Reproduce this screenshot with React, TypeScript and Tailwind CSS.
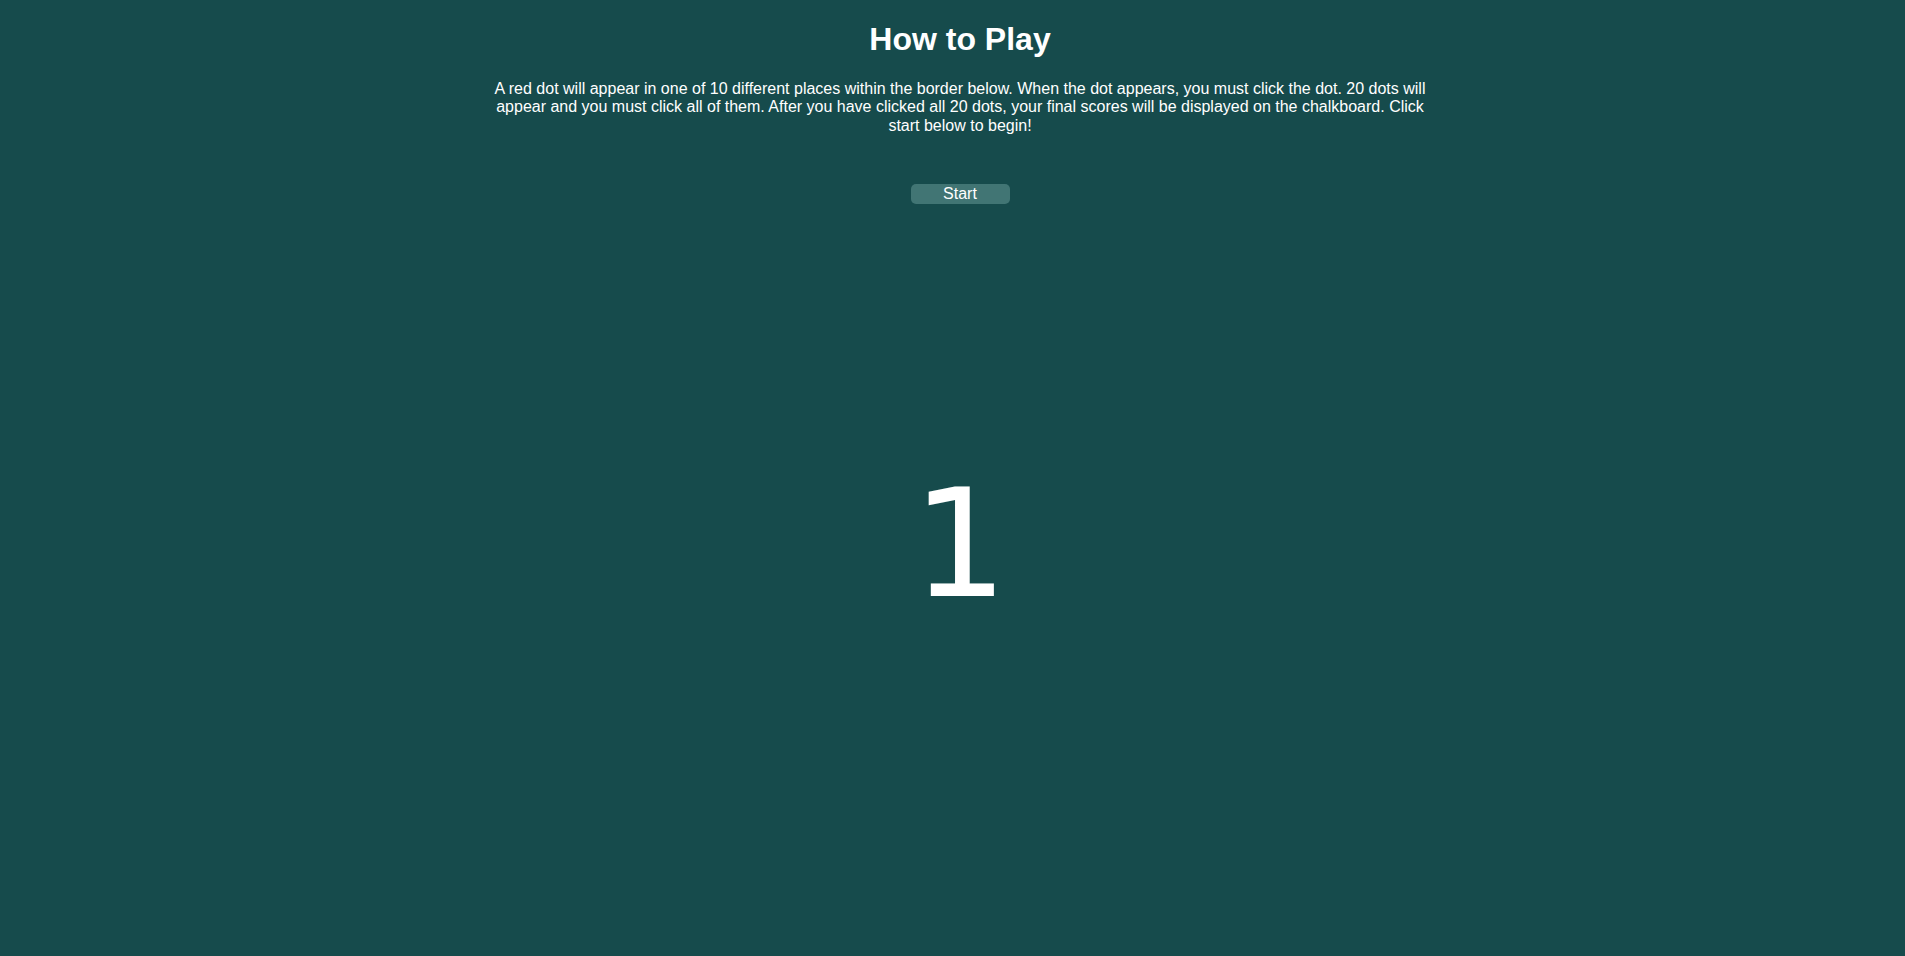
export default function App() {
  return (
    <div className="w-full min-h-[956px] bg-[#164b4c] overflow-hidden text-white">
      <div className="w-[1920px] flex flex-col items-center font-['Liberation_Sans',Arial,sans-serif]">
        <h1 className="mt-[21px] text-[32px] font-bold leading-[37px]">How to Play</h1>
        <p className="mt-[22px] w-[960px] text-center text-[16px] leading-[18.4px]">
          A red dot will appear in one of 10 different places within the border below. When the dot appears, you must click the dot. 20 dots will appear and you must click all of them. After you have clicked all 20 dots, your final scores will be displayed on the chalkboard. Click start below to begin!
        </p>
        <button className="mt-[49px] w-[99px] h-[20px] rounded-[5px] bg-[#417574] text-white text-[16px] leading-[20px] font-['Liberation_Sans',Arial,sans-serif]">
          Start
        </button>
        <div className="mt-[253px] text-[150px] leading-[175px] font-['DejaVu_Sans',sans-serif]">1</div>
      </div>
    </div>
  );
}
